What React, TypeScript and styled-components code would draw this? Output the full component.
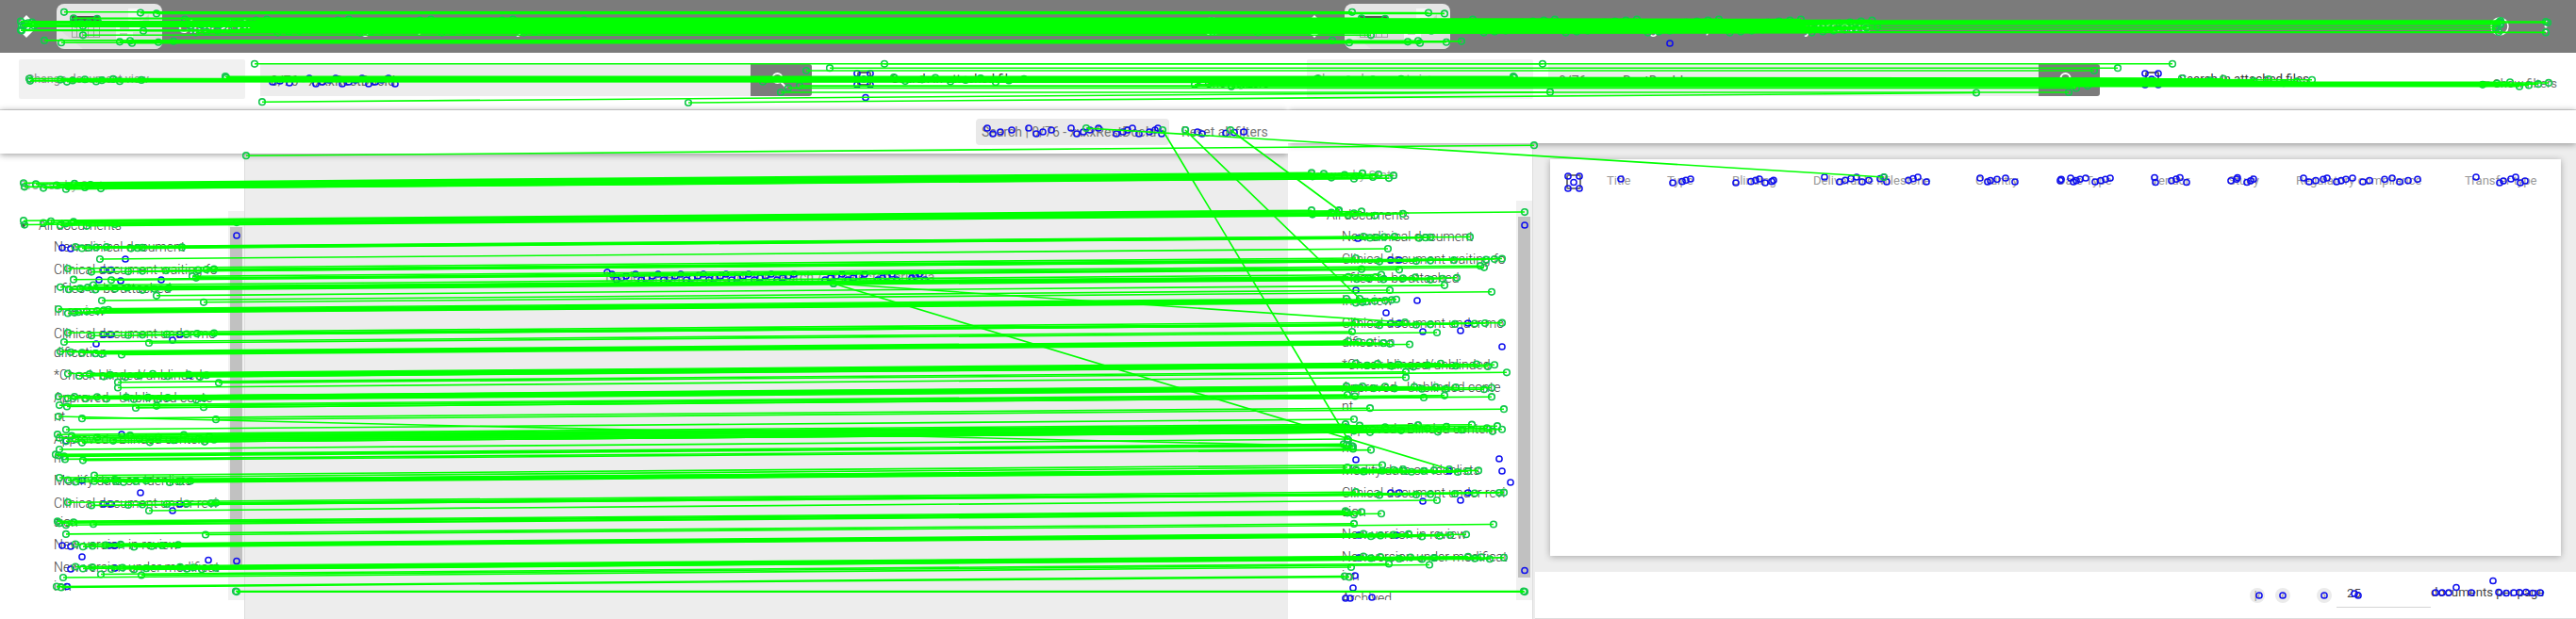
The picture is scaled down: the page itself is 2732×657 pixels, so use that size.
import React from "react";
import styled, { createGlobalStyle } from "styled-components";

const Global = createGlobalStyle`
  html, body { margin: 0; background: #fff; }
  * { box-sizing: border-box; }
  body { font-family: Roboto, "Liberation Sans", sans-serif; width: 2732px; height: 657px; overflow: hidden; }
`;

const Canvas = styled.main`
  position: relative;
  display: flex;
  width: 2732px;
  height: 657px;
  overflow: hidden;
`;
const Pane = styled.section`
  width: 1366px;
  height: 657px;
  display: flex;
  flex-direction: column;
  overflow: hidden;
`;
const Header = styled.header`
  flex: none;
  height: 56px;
  background: #7b7b7b;
  display: flex;
  align-items: center;
  padding: 0 22px 0 18px;
  color: #fff;
`;
const Logo = styled.svg`
  margin-left: 22px;
  flex: none;
`;
const AppTitle = styled.h1`
  margin: 0 auto 0 17px;
  font-size: 18px;
  font-weight: 400;
  white-space: nowrap;
`;
const HelpIcon = styled.svg`
  margin-right: 29px;
`;
const Toolbar = styled.div`
  flex: none;
  height: 61px;
  border-bottom: 1px solid #dcdcdc;
  background: #fff;
  display: flex;
  align-items: center;
  padding: 0 20px 6px;
`;
const ViewSelect = styled.div`
  width: 240px;
  height: 42px;
  margin-top: 1px;
  padding: 0 8px;
  border-radius: 2px;
  background: #f1f1f1;
  color: #8b8b8b;
  font-size: 12.5px;
  line-height: 41px;
`;
const SearchBox = styled.div`
  width: 520px;
  height: 34px;
  margin: 3px 0 0 16px;
  padding-left: 11px;
  background: #ededed;
  color: #666;
  font-size: 14px;
  line-height: 37px;
`;
const SearchButton = styled.div`
  width: 65px;
  height: 34px;
  margin-top: 3px;
  border-radius: 0 3px 3px 0;
  background: #7b7b7b;
  display: grid;
  place-items: center;
  padding-right: 6px;
`;
const AttachLabel = styled.span`
  margin-left: 21px;
  font-size: 13.3px;
  color: #333;
  white-space: nowrap;
`;
const CheckBox = styled.span`
  width: 15px;
  height: 15px;
  margin-left: 48px;
  border: 2px solid #666;
  border-radius: 2px;
  flex: none;
`;
const ShowFilters = styled.span`
  margin-left: auto;
  margin-top: 10px;
  font-size: 13px;
  color: #777;
`;
const Strip = styled.div<{ $h: number }>`
  flex: none;
  height: ${(p) => p.$h}px;
  background: #fff;
  display: flex;
  align-items: center;
  justify-content: flex-end;
  padding: 0 20px 0 0;
  box-shadow: 0 1px 7px rgba(0, 0, 0, 0.42);
  position: relative;
  z-index: 1;
`;
const Chip = styled.span`
  width: 205px;
  height: 28px;
  margin-right: 13px;
  padding-left: 6px;
  border-radius: 4px;
  background: #e9e9e9;
  font-size: 14px;
  line-height: 28px;
  color: #777;
  white-space: nowrap;
`;
const Reset = styled.span`
  width: 93px;
  font-size: 14px;
  color: #777;
  white-space: nowrap;
`;
const Body = styled.div`
  flex: 1;
  min-height: 0;
  display: flex;
`;
const Side = styled.aside`
  width: 259px;
  background: #fff;
  padding-bottom: 20px;
  display: flex;
  flex-direction: column;
`;
const SideTitle = styled.div`
  height: 61px;
  flex: none;
  padding: 26px 0 0 21px;
  color: #a5a5a5;
  font-size: 13.3px;
  line-height: 16px;
`;
const Scroller = styled.div`
  flex: 1;
  min-height: 0;
  display: flex;
`;
const Tree = styled.div`
  flex: 1;
  overflow: hidden;
  color: #3c3c3c;
  font-size: 14px;
  font-weight: 300;
  line-height: 20px;
  white-space: nowrap;
`;
const Root = styled.div`
  height: 26px;
  padding: 4px 0 0 21px;
  display: flex;
  gap: 12px;
  align-items: center;
  svg { flex: none; }
`;
const Item = styled.div`
  padding: 2px 0 2px 57px;
`;
const Track = styled.div<{ $end: number }>`
  width: 17px;
  background: #f1f1f1;
  padding: 17px 2px ${(p) => p.$end}px;
`;
const Thumb = styled.div`
  height: 100%;
  background: #c1c1c1;
`;
const Main = styled.div`
  flex: 1;
  min-width: 0;
  border-left: 1px solid #ddd;
  background: #ededed;
  display: flex;
  flex-direction: column;
`;
const Message = styled.p`
  margin: 122px 0 0 382px;
  color: #888;
  font-size: 14px;
  line-height: 18px;
  white-space: nowrap;
`;
const Card = styled.div`
  height: 421px;
  margin: 17px 16px 17px 18px;
  padding: 15px 0 0 17px;
  background: #fff;
  box-shadow: 0 1px 7px rgba(0, 0, 0, 0.3);
  color: #999;
  font-size: 13.1px;
  display: flex;
  align-items: flex-start;
`;
const HeadCheck = styled.span`
  width: 16px;
  height: 16px;
  margin-top: 1px;
  margin-right: 27px;
  border: 2px solid #777;
  border-radius: 2px;
`;
const Column = styled.span<{ $w: number }>`
  width: ${(p) => p.$w}px;
  line-height: 15px;
  white-space: nowrap;
  flex: none;
`;
const Footer = styled.footer`
  height: 50px;
  margin-left: 2px;
  background: #fff;
  border-bottom: 1px solid #ddd;
  display: flex;
  padding-left: 758px;
  color: #444;
  font-size: 13.2px;
`;
const PageButton = styled.span<{ $gap: number }>`
  width: 16px;
  height: 16px;
  margin: 17px ${(p) => p.$gap}px 0 0;
  border-radius: 50%;
  background: #ebebeb;
  display: grid;
  place-items: center;
  color: #888;
  font-size: 12px;
  line-height: 16px;
`;
const PageSize = styled.span`
  width: 100px;
  height: 38px;
  border-bottom: 1px solid #d5d5d5;
  padding: 15px 0 0 11px;
`;
const PerPage = styled.span`
  padding: 14px 0 0 0;
  white-space: nowrap;
`;
const Overlay = styled.svg`
  position: absolute;
  inset: 0;
  z-index: 3;
  pointer-events: none;
`;

const tree = [
  ["New clinical document"],
  ["Clinical document waiting fo", "r files to be attached"],
  ["In review"],
  ["Clinical document under mo", "dification"],
  ["*Check blinded/unblinded"],
  ["Approved - Unblinded conte", "nt"],
  ["Approved - Blinded content", "nt"],
  ["Modify data on Idenlists"],
  ["Clinical document under revi", "sion"],
  ["New version in review"],
  ["New version under modificat", "ion"],
  ["Archived"],
];

const columns: [string, number][] = [
  ["Title", 64], ["Type", 69], ["Blinding", 86], ["Deliverable Milestone", 172],
  ["Country", 87], ["Date Type", 99], ["Vendor", 82], ["Study", 72],
  ["Regulatory compliance", 179], ["Transfer type", 80],
];

function TopBar() {
  return (
    <Header>
      <svg width="20" height="26" viewBox="0 0 20 26"><path d="M10 1 18 9v8l-8 8-8-8V9z" fill="#fff" /></svg>
      <Logo width="112" height="48" viewBox="0 0 112 48">
        <rect width="112" height="48" rx="8" fill="#e6e6e6" />
        <path d="M0 25 28 48H104q8 0 8-8V25z" fill="#dedede" />
        <path d="M16 13h30v7H16z" fill="#555" />
        <path d="M16.5 20v15M21.5 20v15M27.5 20v15M33.5 20v15M39.5 20v15M45.5 20v15M16 35.5h30" stroke="#a0a0a0" fill="none" />
        <path d="M76 5h12v25H76zM63 20h18v21H63z" fill="#f5f5f5" />
        <path d="M67 26h10M67 32h8M80 16h10" stroke="#ccc" strokeWidth="2" />
        <path d="m89 20 9-9v12z" fill="#d0d0d0" />
      </Logo>
      <AppTitle>Clinical document management, clinical study archive</AppTitle>
      <HelpIcon width="20" height="20" viewBox="0 0 20 20">
        <circle cx="10" cy="10" r="9" fill="none" stroke="#fff" strokeWidth="1.5" />
        <path d="M7.5 8a2.5 2.5 0 1 1 3.6 2.2Q10 10.8 10 12M10 14v1" fill="none" stroke="#fff" strokeWidth="1.5" />
      </HelpIcon>
      <svg width="20" height="20" viewBox="0 0 20 20" fill="#fff">
        <circle cx="10" cy="5" r="1.5" /><circle cx="10" cy="10" r="1.5" /><circle cx="10" cy="15" r="1.5" />
      </svg>
    </Header>
  );
}

function SearchBar() {
  return (
    <Toolbar>
      <ViewSelect>Change document view</ViewSelect>
      <SearchBox>0/76 - xxxxRestDocId</SearchBox>
      <SearchButton>
        <svg width="20" height="20" viewBox="0 0 20 20" fill="none" stroke="#fff" strokeWidth="2">
          <circle cx="8.5" cy="8" r="5" /><path d="m12 12 6 6" />
        </svg>
      </SearchButton>
      <CheckBox />
      <AttachLabel>Search in attached files</AttachLabel>
      <ShowFilters>▾ Show filters</ShowFilters>
    </Toolbar>
  );
}

function Sidebar({ end, items }: { end: number; items: string[][] }) {
  return (
    <Side>
      <SideTitle>Browse by State</SideTitle>
      <Scroller>
        <Tree>
          <Root><svg width="8" height="7"><path d="M0 1h8l-4 5z" fill="#555" /></svg>All documents</Root>
          {items.map((lines, i) => (
            <Item key={i}>{lines.map((l) => <div key={l}>{l}</div>)}</Item>
          ))}
        </Tree>
        <Track $end={end}><Thumb /></Track>
      </Scroller>
    </Side>
  );
}

type Cluster = { y: number; xs: number[]; s?: number; dy?: number };
const D = -11;
const clusters: Cluster[] = [
  { y: 13.6, xs: [68, 149, 166], s: 0.8 },
  { y: 24, xs: [22, 26, 30, 34, 78, 80, 86, 94, 104], s: 1.3 },
  { y: 27.5, xs: [23, 25, 29, 36, 88], s: 0.7 },
  { y: 32.4, xs: [22, 23, 152], s: 0.3 },
  { y: 19.6, xs: [78, 103], s: 0.2 },
  { y: 37.3, xs: [88] },
  { y: 44.3, xs: [47, 65, 127, 138, 140, 168, 184], s: 1.4 },
  { y: 67.8, xs: [270, 938] },
  { y: 72.2, xs: [880] },
  { y: 75, xs: [855], s: 0.3 },
  { y: 81.8, xs: [239, 240], s: 0.6 },
  { y: 85.2, xs: [31, 32, 64, 71, 77, 90, 102, 108, 120, 127, 150], s: 1.6 },
  { y: 84.6, xs: [948, 960, 978, 992, 1008, 1024, 1040, 1056, 1070, 1086], s: 2.6, dy: 1 },
  { y: 89.2, xs: [809, 848, 1267, 1282, 1296, 1306, 1316, 1326, 1337], s: 2.5 },
  { y: 93.4, xs: [836] },
  { y: 98, xs: [828], s: 0.4 },
  { y: 108.6, xs: [278, 730], s: 0.4, dy: -10.5 },
  { y: 165.2, xs: [261], dy: D },
  { y: 197.5, xs: [25, 26, 38, 46, 60, 70, 72, 79, 90, 96, 107, 112], s: 3.2, dy: D },
  { y: 237, xs: [25, 26, 46, 54, 64, 70, 78, 92, 122, 251], s: 2.8, dy: D },
  { y: 262.8, xs: [80, 87, 94, 102, 113, 139, 146, 151, 193], s: 0.8, dy: D },
  { y: 275, xs: [106], dy: D },
  { y: 286.8, xs: [72, 97, 136, 151, 176, 210, 219, 227], s: 1.8, dy: D },
  { y: 294, xs: [204, 208], s: 0.8, dy: D },
  { y: 297, xs: [78, 118], s: 0.3, dy: D },
  { y: 302.5, xs: [99], dy: D },
  { y: 306.3, xs: [64, 73, 85, 93, 101, 122, 135, 151, 164, 179], s: 1.5, dy: D },
  { y: 313.8, xs: [166], dy: D },
  { y: 319, xs: [108], s: 0.5, dy: D },
  { y: 320.8, xs: [216], dy: D },
  { y: 330.3, xs: [62, 72, 79, 83, 92, 103, 110, 115], s: 2.2, dy: D },
  { y: 354.7, xs: [72, 97, 136, 151, 177, 198, 209, 227], s: 1.5, dy: D },
  { y: 363.5, xs: [68, 158], s: 0.5, dy: D },
  { y: 374.8, xs: [64, 75, 87, 101, 108, 129], s: 1.7, dy: D },
  { y: 398.4, xs: [72, 84, 95, 110, 117, 133, 148, 162, 178, 200, 212, 219], s: 1.9, dy: D },
  { y: 406, xs: [125, 232], s: 0.3, dy: D },
  { y: 411.5, xs: [125], dy: D },
  { y: 422.5, xs: [62, 72, 79, 91, 103, 113, 134, 142, 157, 167, 178, 208, 216], s: 1.7, dy: D },
  { y: 431.5, xs: [63, 71, 144, 166, 216], s: 1.4, dy: D },
  { y: 444.7, xs: [87, 229], s: 0.5, dy: D },
  { y: 456, xs: [70], dy: D },
  { y: 465.5, xs: [61, 63, 70, 76, 80, 87, 103, 120, 138, 148, 159, 168, 184, 195, 211, 217, 222, 227], s: 4.3, dy: D },
  { y: 477, xs: [63], dy: D },
  { y: 483.4, xs: [59, 62, 68], s: 1, dy: D },
  { y: 488, xs: [69, 88], s: 0.6, dy: D },
  { y: 504.5, xs: [100], s: 0.4, dy: D },
  { y: 509, xs: [63, 122, 123], s: 2, dy: D },
  { y: 510.8, xs: [72, 80, 100, 112, 131, 144, 155, 180, 191, 202], s: 1.2, dy: D },
  { y: 534.8, xs: [72, 97, 136, 151, 177, 198, 224, 229], s: 1.6, dy: D },
  { y: 542, xs: [158], dy: D },
  { y: 555.3, xs: [61, 63, 70, 78, 99], s: 1.9, dy: D },
  { y: 567.2, xs: [70, 218], s: 0.3, dy: D },
  { y: 579, xs: [80, 88, 98, 112, 128, 142, 161, 172, 189], s: 1.5, dy: D },
  { y: 603, xs: [80, 88, 98, 118, 130, 142, 155, 191, 198, 205, 214, 229], s: 1.5, dy: D },
  { y: 610, xs: [107, 150], s: 0.5, dy: D },
  { y: 613, xs: [67], s: 0.4, dy: D },
  { y: 623, xs: [60, 65], s: 0.4, dy: D },
  { y: 627.8, xs: [250, 251], s: 0.3 },
];

type Seg = [number, number, number, number];
const segs: Seg[] = [];
clusters.forEach((c) => {
  const n = c.xs.length;
  const step = n % 7 === 0 ? 5 : 7;
  c.xs.forEach((x, i) => {
    const k = n < 2 ? 0 : (((i * step) % n) / (n - 1)) * 2 - 1;
    const y = c.y + k * (c.s ?? 0);
    segs.push([x, y, x + 1366, y + (c.dy ?? 0)]);
  });
});
for (let i = 0; i < 75; i++) {
  const x = 196 + i * 5.8;
  const y = 20.6 + ((i * 7) % 15);
  segs.push([x, y, x + 1366, y]);
}
segs.push([1285, 23, 2651, 23], [1285, 28.5, 2648, 28.5], [1283, 31, 2647, 31], [1286, 34, 2650, 34], [1285, 26, 2652, 26], [1285, 22, 2652, 22], [1285, 24.8, 2652, 24.8], [1334, 23, 2700, 23], [1334, 34.4, 2700, 34.4], [1334, 24, 2702, 24]);
segs.push(
  [1152, 136, 1998, 188], [1233, 138, 1430, 467], [1257, 138, 1442, 317], [1305, 138, 1420, 223],
  [884, 301, 1490, 342], [884, 301, 1537, 498], [62, 442, 1435, 474]
);

const range = (a: number, b: number, step: number) =>
  Array.from({ length: Math.floor((b - a) / step) + 1 }, (_, i) => a + i * step);
const wave = (xs: number[], y: number, amp = 1.5): [number, number][] =>
  xs.map((x, i) => [x, y + (((i * 3) % 4) / 3 - 0.5) * amp * 2]);

const loose: [number, number][] = [
  [1771, 46], [133, 275], [66, 263], [75, 264], [110, 286.5], [118, 286.5], [105, 297], [128, 298], [171, 297],
  [110, 355], [118, 355], [191, 355], [102, 365], [183, 361], [201, 398.5], [129, 461], [70, 468], [87, 510],
  [149, 523], [110, 535], [118, 535], [191, 535], [183, 542], [66, 579], [75, 580], [116, 579], [122, 579],
  [87, 591], [221, 594.5], [75, 604], [122, 603], [71, 622.5], [251, 250], [251, 595.5],
  [1440, 253], [1475, 276], [1484, 276], [1438, 308], [1503, 319], [1470, 332], [1475, 343], [1484, 343],
  [1557, 343], [1509, 352], [1549, 351], [1593, 368], [1438, 488], [1590, 487], [1593, 500], [1602, 512],
  [1537, 500], [1475, 523], [1484, 523], [1557, 523], [1509, 532], [1549, 531], [1441, 568], [1481, 568],
  [1441, 592], [1521, 592], [1437, 611], [1435, 624], [1427, 635], [1432, 635], [1455, 634], [1617, 239], [1617, 605.5],
  [289, 87], [297, 86], [307, 88], [918, 103.5],
  ...wave(range(328, 420, 7), 86, 3),
  ...[909, 923, 2275, 2289].flatMap((x): [number, number][] => [[x, 78], [x, 90]]),
  [916, 84], [2282, 84],
  ...wave([1047, 1053, 1061, 1073, 1091, 1099, 1106, 1115, 1136, 1142, 1149, 1156, 1165, 1184, 1191, 1196, 1201, 1208, 1219, 1225, 1228, 1232], 139, 3),
  ...wave([1270, 1275, 1300, 1309, 1319], 141, 1),
  [1663, 187], [1675, 187], [1663, 200], [1675, 200], [1669, 193.5],
  ...wave([1719, 1774, 1784, 1788, 1793, 1841, 1857, 1862, 1866, 1872, 1879, 1881], 192, 2),
  ...wave([1935, 1951, 1957, 1963, 1969, 1975, 1982, 1994, 1998, 2001, 2024, 2029, 2034, 2043], 190.5, 2.5),
  ...wave([2100, 2108, 2111, 2118, 2127, 2137, 2185, 2186, 2196, 2199, 2202, 2206, 2212, 2222, 2228, 2233, 2238], 191, 2),
  ...wave([2285, 2286, 2303, 2308, 2312, 2319, 2366, 2372, 2373, 2383, 2387, 2390], 191, 2.5),
  ...wave([2443, 2449, 2456, 2464, 2468, 2478, 2483, 2488, 2495, 2506, 2513, 2529, 2537, 2545, 2554, 2564], 191, 2),
  ...wave([2626, 2651, 2655, 2663, 2668, 2673, 2678], 191, 3),
  [2396, 632], [2421, 632], [2465, 632], [2497, 630], [2501, 632],
  [2583, 629], [2590, 629], [2597, 629], [2605, 623.5], [2621, 629], [2644, 616.5],
  ...wave([2650, 2658, 2666, 2672, 2679, 2686, 2694], 629, 0.5),
  [644, 289],
  ...wave([...range(649, 664, 5), ...range(674, 842, 6), ...range(875, 920, 6), ...range(931, 955, 5), 967, 971, 975, 981], 294, 3),
];

function Matches() {
  return (
    <Overlay width="2732" height="657" viewBox="0 0 2732 657" fill="none">
      <g stroke="#1010ee" strokeWidth="1.5">
        {loose.map(([x, y], i) => <circle key={i} cx={x} cy={y} r="3.1" />)}
      </g>
      <g stroke="#12c84c" strokeWidth="1.6">
        {segs.map(([a, b, c, d], i) => (
          <React.Fragment key={i}><circle cx={a} cy={b} r="3.3" /><circle cx={c} cy={d} r="3.3" /></React.Fragment>
        ))}
      </g>
      <g stroke="#00ff00" strokeWidth="1.6">
        {segs.map(([a, b, c, d], i) => <path key={i} d={`M${a} ${b}L${c} ${d}`} />)}
      </g>
    </Overlay>
  );
}

export default function App() {
  return (
    <Canvas>
      <Global />
      <Pane>
        <TopBar />
        <SearchBar />
        <Strip $h={46}>
          <Chip>Search | 0/76 - xxxxRestDocId</Chip>
          <Reset>Reset all filters</Reset>
        </Strip>
        <Body>
          <Sidebar end={37} items={tree.slice(0, -1)} />
          <Main><Message>No documents found for the search / or selected criteria</Message></Main>
        </Body>
      </Pane>
      <Pane>
        <TopBar />
        <SearchBar />
        <Strip $h={35} />
        <Body>
          <Sidebar end={24} items={tree} />
          <Main>
            <Card>
              <HeadCheck />
              {columns.map(([name, w]) => <Column key={name} $w={w}>{name}</Column>)}
            </Card>
            <Footer>
              <PageButton $gap={11}>|‹</PageButton>
              <PageButton $gap={28}>‹</PageButton>
              <PageButton $gap={5}>›</PageButton>
              <PageSize>25</PageSize>
              <PerPage>documents per page</PerPage>
            </Footer>
          </Main>
        </Body>
      </Pane>
      <Matches />
    </Canvas>
  );
}
